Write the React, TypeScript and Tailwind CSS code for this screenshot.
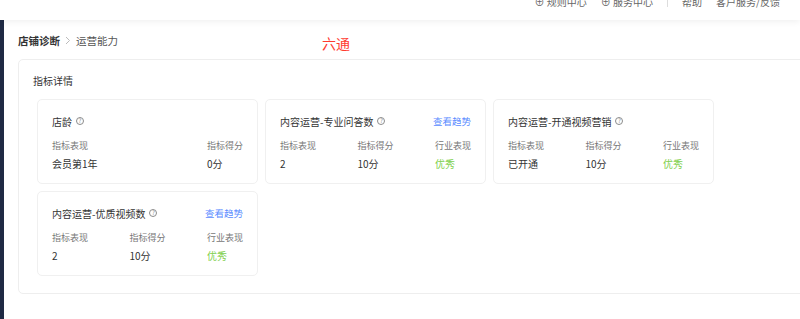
import React from 'react';

type Metric = {
  title: string;
  trend?: boolean;
  cols: { label: string; value: string; good?: boolean }[];
};

const METRICS: Metric[] = [
  {
    title: '店龄',
    cols: [
      { label: '指标表现', value: '会员第1年' },
      { label: '指标得分', value: '0分' },
    ],
  },
  {
    title: '内容运营-专业问答数',
    trend: true,
    cols: [
      { label: '指标表现', value: '2' },
      { label: '指标得分', value: '10分' },
      { label: '行业表现', value: '优秀', good: true },
    ],
  },
  {
    title: '内容运营-开通视频营销',
    cols: [
      { label: '指标表现', value: '已开通' },
      { label: '指标得分', value: '10分' },
      { label: '行业表现', value: '优秀', good: true },
    ],
  },
  {
    title: '内容运营-优质视频数',
    trend: true,
    cols: [
      { label: '指标表现', value: '2' },
      { label: '指标得分', value: '10分' },
      { label: '行业表现', value: '优秀', good: true },
    ],
  },
];

function Help() {
  return (
    <span className="ml-[4px] inline-flex h-[8px] w-[8px] items-center justify-center rounded-full border border-[#8c8c8c] text-[6px] leading-none text-[#8c8c8c]">
      ?
    </span>
  );
}

function MetricCard({ m }: { m: Metric }) {
  return (
    <div className="h-[85px] w-[221px] rounded-[5px] border border-[#f0f0f0] bg-white px-[14px] pt-[14px]">
      <div className="flex h-[14px] items-center justify-between">
        <div className="flex items-center text-[10px] text-[#333]">
          {m.title}
          <Help />
        </div>
        {m.trend && <span className="text-[9.5px] text-[#5b8cff]">查看趋势</span>}
      </div>
      <div className="mt-[12px] flex justify-between">
        {m.cols.map((c) => (
          <div key={c.label} className="flex flex-col">
            <span className="h-[12px] text-[9px] leading-[12px] text-[#777]">{c.label}</span>
            <span
              className={`mt-[5px] h-[14px] text-[10px] leading-[14px] ${c.good ? 'text-[#7fd04e]' : 'text-[#333]'}`}
            >
              {c.value}
            </span>
          </div>
        ))}
      </div>
    </div>
  );
}

export default function App() {
  return (
    <div
      className="h-[319px] w-[800px] overflow-hidden bg-white"
      style={{ fontFamily: '"Noto Sans CJK SC", "Liberation Sans", sans-serif' }}
    >
      <header className="relative z-10 flex h-[20px] items-start justify-end bg-white pr-[20px] shadow-[0_2px_6px_rgba(0,0,0,0.06)]">
        <div className="-mt-[6px] flex items-center gap-[14px] text-[10px] text-[#666]">
          <span>⊕ 规则中心</span>
          <span>⊕ 服务中心</span>
          <span className="h-[10px] w-px bg-[#ddd]" />
          <span>帮助</span>
          <span>客户服务/反馈</span>
        </div>
      </header>
      <div className="flex h-[299px]">
        <div className="w-[4px] shrink-0 bg-[#1f2a44]" />
        <main className="flex-1 overflow-hidden pl-[14px]">
          <div className="flex h-[39px] items-center pt-[2px] text-[10.5px]">
            <span className="font-semibold text-[#333]">店铺诊断</span>
            <svg className="mx-[5px]" width="6" height="9" viewBox="0 0 6 9" fill="none">
              <path d="M1 1l3.5 3.5L1 8" stroke="#bbb" strokeWidth="1" />
            </svg>
            <span className="text-[#555]">运营能力</span>
            <span className="ml-[204px] mt-[5px] text-[14px] text-[#ff3b30]">六通</span>
          </div>
          <section className="h-[235px] w-[820px] rounded-[5px] border border-[#eeeeee] bg-white pl-[14px]">
            <div className="flex h-[39px] items-center pt-[2px] text-[10px] text-[#333]">指标详情</div>
            <div className="grid w-[684px] grid-cols-[221px_221px_221px] gap-x-[7px] gap-y-[7px] pl-[4px]">
              {METRICS.map((m) => (
                <MetricCard key={m.title} m={m} />
              ))}
            </div>
          </section>
        </main>
      </div>
    </div>
  );
}
